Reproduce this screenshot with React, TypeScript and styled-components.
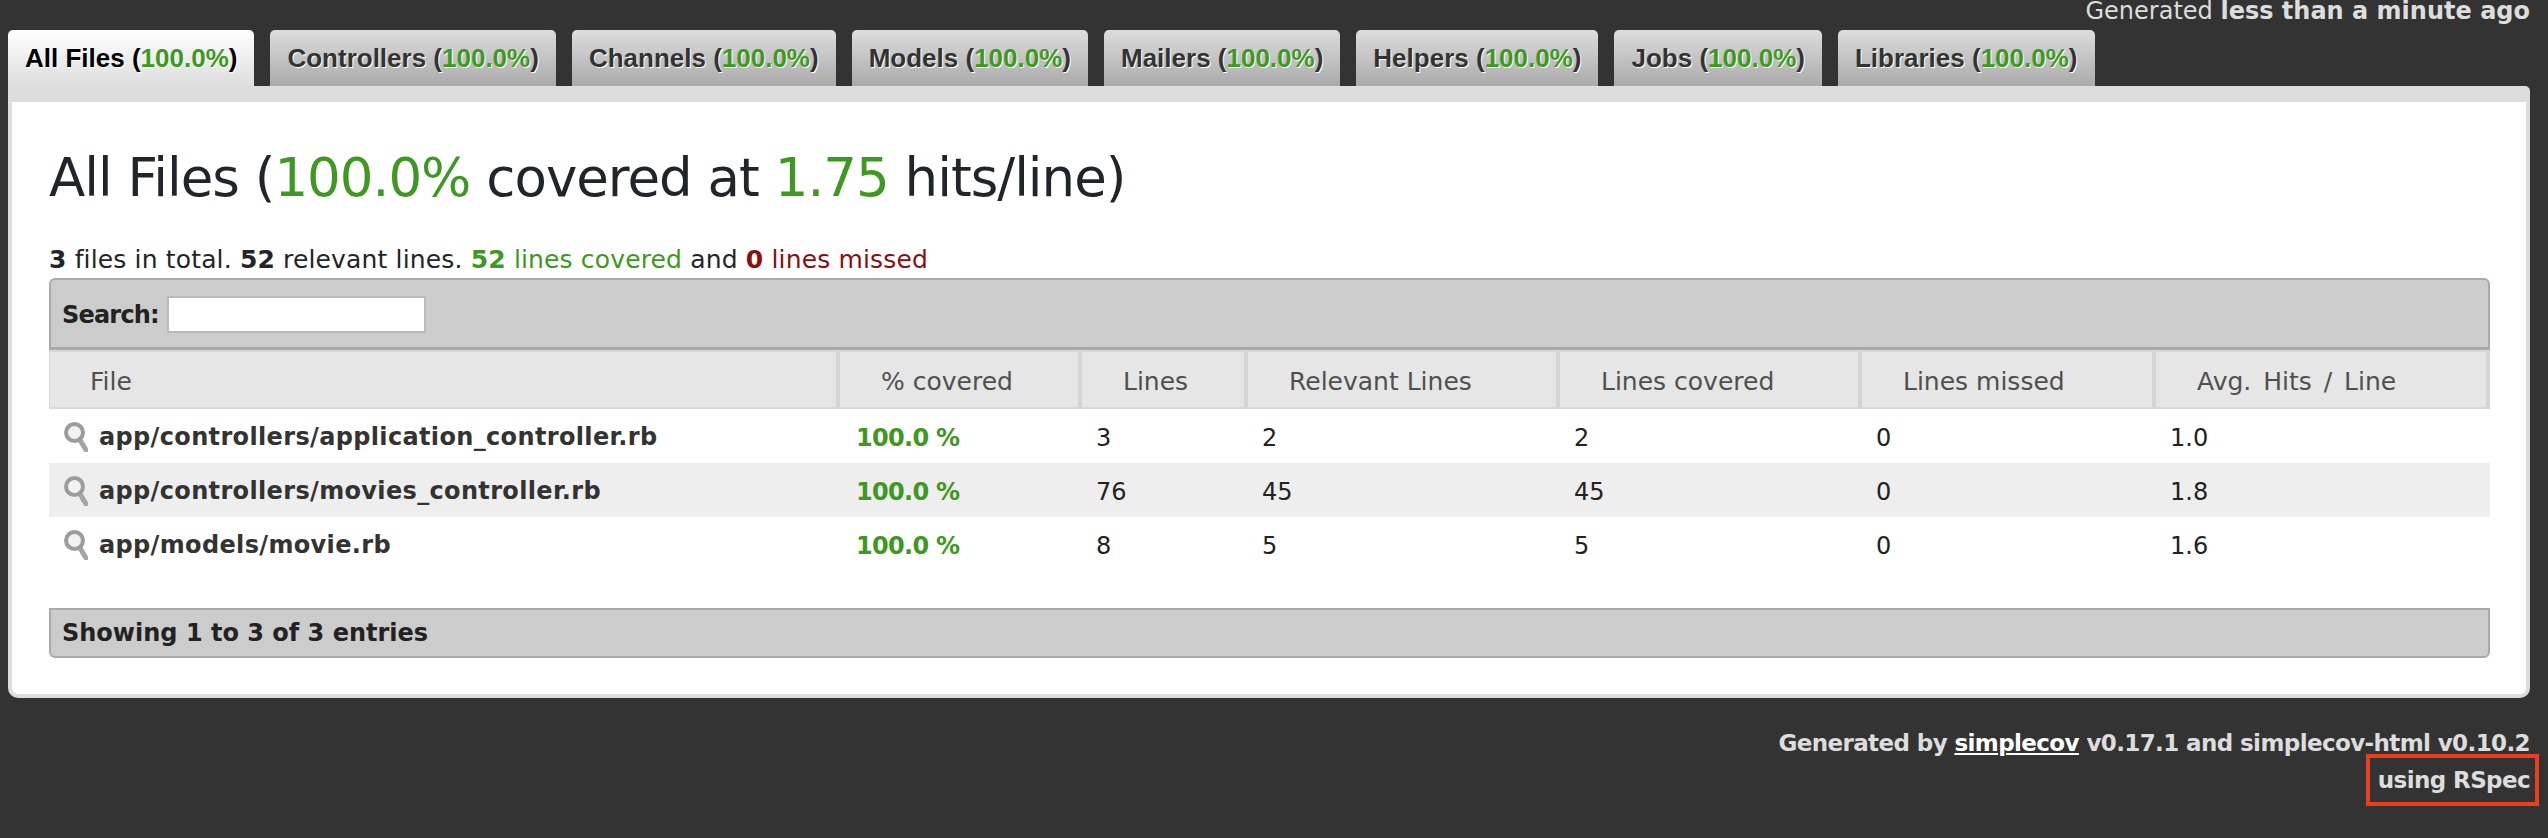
import React from "react";
import styled, { createGlobalStyle } from "styled-components";

const Global = createGlobalStyle`
  html, body { margin: 0; padding: 0; background: #333; }
  body { font-family: "DejaVu Sans", "Liberation Sans", sans-serif; }
`;

const Page = styled.div`
  width: 2548px;
  height: 838px;
  background: #333;
  overflow: hidden;
  box-sizing: border-box;
  padding: 0 18px 0 8px;
  position: relative;
`;

const Timestamp = styled.div`
  height: 30px;
  text-align: right;
  color: #ddd;
  font-size: 24px;
  line-height: 22px;
`;

const Tabs = styled.div`
  display: flex;
  gap: 16px;
  height: 56px;
`;

const Tab = styled.div<{ $active?: boolean }>`
  box-sizing: border-box;
  border-radius: 5px 5px 0 0;
  padding: 0 17px;
  font-family: "Liberation Sans", Arial, sans-serif;
  font-weight: 700;
  font-size: 26px;
  line-height: 56px;
  white-space: nowrap;
  color: ${(p) => (p.$active ? "#000" : "#333")};
  text-shadow: 1px 1px 0 #fff;
  background: ${(p) =>
    p.$active
      ? "linear-gradient(#fff, #ddd)"
      : "linear-gradient(#ddd, #aaa)"};
`;

const Green = styled.span`
  color: #3e9822;
`;
const Red = styled.span`
  color: #8b0f0f;
`;

const Panel = styled.div`
  width: 2522px;
  height: 612px;
  box-sizing: border-box;
  background: #fff;
  border: 4px solid #ddd;
  border-top-width: 16px;
  border-radius: 0 5px 10px 10px;
  padding: 0 36px 0 37px;
`;

const Title = styled.h2`
  margin: 0;
  padding-top: 46px;
  font-size: 53px;
  letter-spacing: -1px;
  line-height: 60px;
  font-weight: 400;
  color: #1f2529;
  white-space: nowrap;
`;

const Summary = styled.div`
  margin-top: 38px;
  margin-bottom: 4px;
  font-size: 25px;
  letter-spacing: 0.15px;
  line-height: 28px;
  color: #1f2529;
  white-space: nowrap;
  b { font-weight: 700; }
`;

const SearchBar = styled.div`
  height: 72px;
  box-sizing: border-box;
  background: #ccc;
  border: 2px solid #aaa;
  border-bottom-width: 3px;
  border-radius: 6px 6px 0 0;
  display: flex;
  align-items: center;
  padding: 2px 0 0 11px;
  gap: 8px;
  font-weight: 700;
  font-size: 24px;
  letter-spacing: -0.8px;
  color: #222;
`;

const SearchInput = styled.div`
  width: 259px;
  height: 37px;
  box-sizing: border-box;
  background: #fff;
  border: 2px solid #bbb;
`;

const Grid = styled.div`
  display: grid;
  grid-template-columns: 791px 242px 166px 312px 302px 294px 334px;
`;

const HeadCell = styled.div<{ $word?: number }>`
  height: 59px;
  box-sizing: border-box;
  background: #e6e6e6;
  border-top: 2px solid #d8d8d8;
  border-right: 4px solid #d4d4d4;
  border-bottom: 2px solid #d8d8d8;
  padding-left: 41px;
  line-height: 59px;
  font-size: 25px;
  word-spacing: ${(p) => p.$word ?? 0}px;
  color: #505050;
  white-space: nowrap;
  &:first-child {
    border-left: 1px solid #d8d8d8;
    padding-left: 40px;
  }
  &:last-child {
    border-right-width: 1px;
  }
`;

const Row = styled.div<{ $odd?: boolean }>`
  display: contents;
  & > div {
    background: ${(p) => (p.$odd ? "#eee" : "#fff")};
  }
`;

const Cell = styled.div`
  height: 54px;
  box-sizing: border-box;
  padding: 2px 0 0 14px;
  line-height: 54px;
  font-size: 24px;
  color: #222;
  white-space: nowrap;
`;

const FileCell = styled(Cell)`
  display: flex;
  align-items: center;
  gap: 10px;
  padding: 0 0 0 14px;
  font-weight: 700;
  letter-spacing: 0.35px;
  color: #333;
  span {
    padding-top: 2px;
  }
`;

const PctCell = styled(Cell)`
  padding-left: 16px;
  font-weight: 700;
  letter-spacing: -0.7px;
  color: #3e9822;
`;

const TableFoot = styled.div`
  margin-top: 37px;
  height: 50px;
  box-sizing: border-box;
  background: #ccc;
  border: 2px solid #aaa;
  border-radius: 0 0 6px 6px;
  display: flex;
  align-items: center;
  padding-left: 11px;
  font-weight: 700;
  font-size: 24px;
  color: #222;
`;

const Footer = styled.div`
  padding-top: 27px;
  text-align: right;
  color: #ddd;
  font-size: 23px;
  letter-spacing: -0.6px;
  line-height: 37px;
  font-weight: 700;
  a { color: #fff; text-decoration: underline; }
`;

const UsingBox = styled.div`
  position: absolute;
  left: 2366px;
  top: 754px;
  width: 173px;
  height: 52px;
  box-sizing: border-box;
  border: 4px solid #e8401c;
`;

const Glass = () => (
  <svg width="26" height="32" viewBox="0 0 26 32" aria-hidden="true">
    <defs>
      <filter id="soft" x="-10%" y="-10%" width="120%" height="120%">
        <feGaussianBlur stdDeviation="0.5" />
      </filter>
    </defs>
    <g filter="url(#soft)">
      <path d="M17 20 L23 30" stroke="#a5a5a5" strokeWidth="5" strokeLinecap="round" />
      <circle cx="11.5" cy="12.5" r="8.5" fill="#f2f2f2" stroke="#9c9c9c" strokeWidth="4" />
    </g>
  </svg>
);

const tabs = ["Controllers", "Channels", "Models", "Mailers", "Helpers", "Jobs", "Libraries"];

const rows = [
  ["app/controllers/application_controller.rb", "3", "2", "2", "0", "1.0"],
  ["app/controllers/movies_controller.rb", "76", "45", "45", "0", "1.8"],
  ["app/models/movie.rb", "8", "5", "5", "0", "1.6"],
];

const heads = ["File", "% covered", "Lines", "Relevant Lines", "Lines covered", "Lines missed", "Avg. Hits / Line"];

export default function App() {
  return (
    <Page>
      <Global />
      <Timestamp>
        Generated <b>less than a minute ago</b>
      </Timestamp>
      <Tabs>
        <Tab $active>
          All Files (<Green>100.0%</Green>)
        </Tab>
        {tabs.map((name) => (
          <Tab key={name}>
            {name} (<Green>100.0%</Green>)
          </Tab>
        ))}
      </Tabs>
      <Panel>
        <Title>
          All Files (<Green>100.0%</Green> covered at <Green>1.75</Green> hits/line)
        </Title>
        <Summary>
          <b>3</b> files in total. <b>52</b> relevant lines.{" "}
          <Green>
            <b>52</b> lines covered
          </Green>{" "}
          and{" "}
          <Red>
            <b>0</b> lines missed
          </Red>
        </Summary>
        <SearchBar>
          Search:
          <SearchInput />
        </SearchBar>
        <Grid>
          {heads.map((h) => (
            <HeadCell key={h} $word={h.startsWith("Avg") ? 4 : 0}>
              {h}
            </HeadCell>
          ))}
          {rows.map((r, i) => (
            <Row key={r[0]} $odd={i === 1}>
              <FileCell>
                <Glass />
                <span>{r[0]}</span>
              </FileCell>
              <PctCell>100.0 %</PctCell>
              {r.slice(1).map((v, j) => (
                <Cell key={j}>{v}</Cell>
              ))}
            </Row>
          ))}
        </Grid>
        <TableFoot>Showing 1 to 3 of 3 entries</TableFoot>
      </Panel>
      <Footer>
        Generated by <a>simplecov</a> v0.17.1 and simplecov-html v0.10.2
        <br />
        using RSpec
      </Footer>
      <UsingBox />
    </Page>
  );
}
